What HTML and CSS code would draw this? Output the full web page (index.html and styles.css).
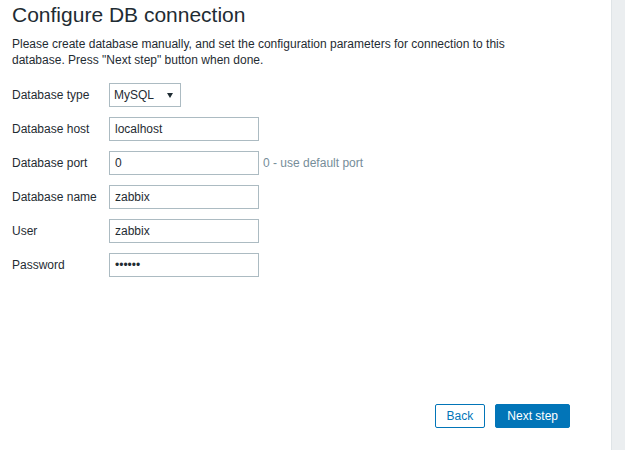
FILE: index.html
```html
<!DOCTYPE html>
<html lang="en">

<head>
  <meta charset="UTF-8" />
  <title>Configure DB connection</title>
  <link rel="stylesheet" href="styles.css">
</head>

<body>
  <div class="page">
    <main class="setup">
      <h1>Configure DB connection</h1>
      <p class="intro">Please create database manually, and set the configuration parameters for connection to this<br>
        database. Press "Next step" button when done.</p>

      <form class="db-form">
        <label for="type">Database type</label>
        <div class="field">
          <div class="select-wrap">
            <select id="type">
              <option>MySQL</option>
              <option>PostgreSQL</option>
            </select>
          </div>
        </div>

        <label for="host">Database host</label>
        <div class="field"><input id="host" type="text" value="localhost"></div>

        <label for="port">Database port</label>
        <div class="field">
          <input id="port" type="text" value="0">
          <span class="hint">0 - use default port</span>
        </div>

        <label for="name">Database name</label>
        <div class="field"><input id="name" type="text" value="zabbix"></div>

        <label for="user">User</label>
        <div class="field"><input id="user" type="text" value="zabbix"></div>

        <label for="pass">Password</label>
        <div class="field"><input id="pass" type="password" value="zabbix"></div>
      </form>

      <div class="buttons">
        <button type="button" class="btn-alt">Back</button>
        <button type="button" class="btn">Next step</button>
      </div>
    </main>
    <aside class="side"></aside>
  </div>
</body>

</html>
```

FILE: styles.css
```css
body {
  margin: 0;
  padding: 0;
  background: #fff;
  font-family: "Liberation Sans", Arial, sans-serif;
  font-size: 12px;
  color: #1f2c33;
}

.page {
  display: flex;
  height: 450px;
}

.setup {
  flex: 1;
  display: flex;
  flex-direction: column;
  padding: 3px 41px 22px 12px;
}

.setup h1 {
  margin: 0;
  font-size: 21px;
  font-weight: normal;
  line-height: 24px;
}

.intro {
  margin: 9px 0 15px 0;
  line-height: 16px;
}

.db-form {
  display: grid;
  grid-template-columns: 97px auto;
  grid-auto-rows: 24px;
  row-gap: 10px;
  align-items: center;
}

.field {
  display: flex;
  align-items: center;
  gap: 4px;
}

.field input {
  box-sizing: border-box;
  width: 150px;
  height: 24px;
  margin: 0;
  padding: 0 5px;
  border: 1px solid #acbbc2;
  border-radius: 0;
  font-family: inherit;
  font-size: 12px;
  color: #1f2c33;
  outline: none;
}

.hint {
  color: #768d99;
}

.select-wrap {
  position: relative;
}

.select-wrap select {
  box-sizing: border-box;
  width: 72px;
  height: 24px;
  margin: 0;
  padding: 0 18px 0 4px;
  border: 1px solid #acbbc2;
  border-radius: 0;
  background: #fff;
  font-family: inherit;
  font-size: 12px;
  color: #1f2c33;
  appearance: none;
  -webkit-appearance: none;
  outline: none;
}

.select-wrap::after {
  content: "";
  position: absolute;
  left: 58px;
  top: 10px;
  border-left: 3px solid transparent;
  border-right: 3px solid transparent;
  border-top: 5px solid #1f2c33;
  pointer-events: none;
}

.buttons {
  margin-top: auto;
  display: flex;
  justify-content: flex-end;
  gap: 10px;
}

.buttons button {
  box-sizing: border-box;
  height: 24px;
  padding: 0 11px;
  border: 1px solid #0275b8;
  border-radius: 2px;
  font-family: inherit;
  font-size: 12px;
  cursor: pointer;
}

.btn {
  background: #0275b8;
  color: #fff;
}

.btn-alt {
  background: #fff;
  color: #0275b8;
}

.side {
  width: 13px;
  background: #ebeef0;
  border-left: 1px solid #dfe4e7;
}
```
